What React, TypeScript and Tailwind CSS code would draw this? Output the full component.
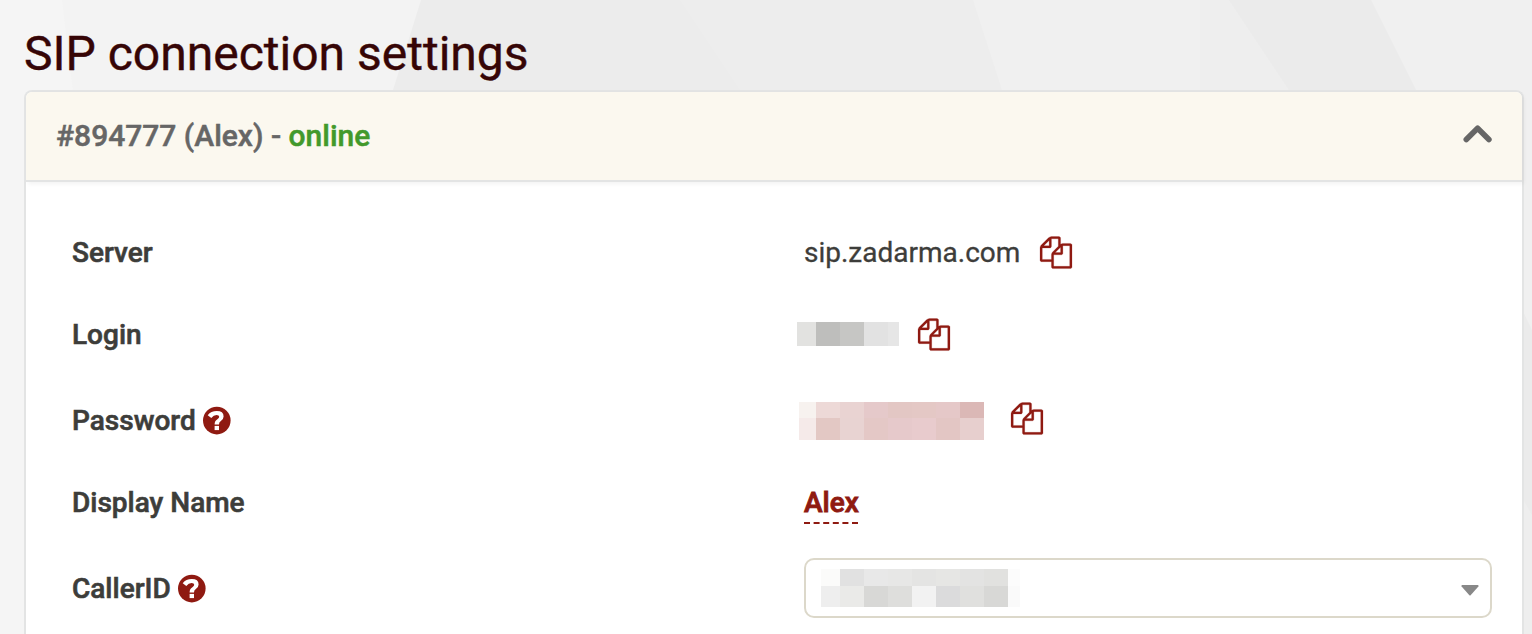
import React from 'react';
import { clsx } from 'clsx';

interface IconProps {
  className?: string;
}

interface RowProps {
  label: string;
  hint?: boolean;
  className?: string;
  children: React.ReactNode;
}

interface MaskProps {
  rows: string[][];
  columns: string;
  className?: string;
}

const LOGIN_MASK = [['#e2e2e0', '#bebebc', '#c6c6c4', '#e2e2e2', '#e6e6e6']];

const PASSWORD_MASK = [
  ['#f7f2ef', '#edd9d7', '#e9d3d2', '#e5c9ca', '#e3c7c4', '#e4c8c5', '#e5c8c8', '#dbb8b6'],
  ['#f5eae9', '#e3c8c4', '#e8d3d2', '#e4c8c6', '#e6c9cb', '#e8cbcd', '#e3c6c4', '#e7cfce'],
];

const CALLER_MASK = [
  ['#fbfbfa', '#e1e1e1', '#e8e8e8', '#e7e7e6', '#e4e4e3', '#e6e6e4', '#e3e3e2', '#e1e1df', '#fcfcfc'],
  ['#eeeeee', '#eaeae8', '#d8d8d6', '#dededc', '#f2f2f2', '#dbdbdc', '#e0e0de', '#d8d8d6', '#fafafa'],
];

function CopyIcon({ className }: IconProps) {
  return (
    <svg
      viewBox="0 24 1792 1792"
      fill="currentColor"
      stroke="currentColor"
      strokeWidth="12"
      className={clsx('h-8 w-8 shrink-0 overflow-visible text-[#8f1a11]', className)}
    >
      <path d="M1696 384q40 0 68 28t28 68v1216q0 40-28 68t-68 28h-960q-40 0-68-28t-28-68v-288h-544q-40 0-68-28t-28-68v-672q0-40 20-88t48-76l408-408q28-28 76-48t88-20h416q40 0 68 28t28 68v328q68-40 128-40h416zm-544 213l-299 299h299v-299zm-640-384l-299 299h299v-299zm196 647l316-316v-416h-384v416q0 40-28 68t-68 28h-416v640h512v-256q0-40 20-88t48-76zm956 804v-1152h-384v416q0 40-28 68t-68 28h-416v640h896z" />
    </svg>
  );
}

function HintIcon({ className }: IconProps) {
  return (
    <svg viewBox="0 0.4 28 28" fill="none" className={clsx('h-7 w-7 shrink-0 overflow-visible', className)}>
      <circle cx="13.8" cy="14" r="13.8" fill="#8f1a11" />
      <path
        d="M4.7 8.6Q8 4.4 13.8 4.4Q20.6 4.4 20.6 9.8Q20.6 12.8 17.6 14.6Q16 15.6 16 17.9H11.6Q11.6 14.2 14.4 12.6Q16.2 11.5 16.2 10.2Q16.2 8.4 13.6 8.4Q10.6 8.4 8.3 11.4Z"
        fill="#fff"
      />
      <path d="M11.6 19.3H16V23.5H11.6Z" fill="#fff" />
    </svg>
  );
}

// Hidden value, shown as coloured blocks
function Mask({ rows, columns, className }: MaskProps) {
  return (
    <div className={clsx('grid shrink-0', columns, className)}>
      {rows.flat().map((color, i) => (
        <div key={i} style={{ backgroundColor: color }}></div>
      ))}
    </div>
  );
}

function Row({ label, hint, className, children }: RowProps) {
  return (
    <div className={clsx('grid grid-cols-[732px_688px] items-center', className)}>
      <div className={clsx('flex items-center gap-[7px] font-medium', hint && 'pt-px')}>
        <span className="[-webkit-text-stroke:0.6px_currentColor]">{label}</span>
        {hint && <HintIcon />}
      </div>
      <div className="flex items-center">{children}</div>
    </div>
  );
}

function Backdrop() {
  return (
    <svg viewBox="0 0 1532 634" className="absolute inset-0 h-full w-full">
      <path d="M0 0H1532V634H0Z" fill="#f5f5f5" />
      <path d="M62 0H1532V634H170Q95 300 62 0Z" fill="#f3f3f3" />
      <path d="M421 0H1532V634H360L393 90Z" fill="#ececec" />
      <path d="M680 0H1532V634H1160L740 90Z" fill="#ededed" />
      <path d="M973 0H1532V634H1160Q1030 250 1002 90Z" fill="#f0f0f0" />
      <path d="M1200 0H1532V634H1200Z" fill="#eeeeee" />
      <path d="M1229 0H1532V634H1600L1289 90Z" fill="#ebebeb" />
      <path d="M1371 0H1532V330L1416 90Z" fill="#f0f0f0" />
    </svg>
  );
}

export default function App() {
  return (
    <div className="relative h-[634px] w-[1532px] overflow-hidden font-[Roboto,sans-serif] text-[28px] leading-8 text-[#3d3d3a]">
      <Backdrop />

      <div className="relative flex h-full flex-col pl-6">
        <h1 className="h-[90px] pt-[26px] text-[48px] leading-[56px] text-[#360506] [-webkit-text-stroke:0.4px_currentColor]">
          SIP connection settings
        </h1>

        <section className="w-[1500px] grow rounded-t-lg border-2 border-b-0 border-[#e3e4e4] bg-white">
          <header className="flex h-[90px] items-center justify-between rounded-t-md border-b-2 border-[#e3e4e4] bg-[#fbf8ef] pr-[29px] pl-[30px] text-[30px] font-medium text-[#666666] shadow-[2px_2px_4px_rgba(0,0,0,0.05)]">
            <div className="[-webkit-text-stroke:0.5px_currentColor]">
              #894777 (Alex) - <span className="text-[#42992b]">online</span>
            </div>
            <svg viewBox="0 0 30 20" fill="none" stroke="currentColor" strokeWidth="5.6" strokeLinecap="round" strokeLinejoin="round" className="mb-1 h-5 w-[30px]">
              <path d="M3.3 15.6L14.6 4.3L25.9 15.6" />
            </svg>
          </header>

          <div className="pt-[30px] pl-[46px]">
            <Row label="Server" className="h-[82px]">
              <span className="[-webkit-text-stroke:0.3px_currentColor]">sip.zadarma.com</span>
              <CopyIcon className="mb-px ml-5" />
            </Row>
            <Row label="Login" className="h-[82px]">
              <Mask rows={LOGIN_MASK} columns="grid-cols-[19px_24px_24px_24px_11px]" className="mb-0.5 -ml-[7px] h-6" />
              <CopyIcon className="mb-px ml-[19.2px]" />
            </Row>
            <Row label="Password" hint className="h-[88px]">
              <Mask rows={PASSWORD_MASK} columns="grid-cols-[17px_24px_24px_24px_24px_24px_24px_24px] grid-rows-[16px_22px]" className="mt-0.5 -ml-[5px]" />
              <CopyIcon className="mb-[3px] ml-[26.8px]" />
            </Row>
            <Row label="Display Name" className="h-[78px]">
              <span className="-mb-[5px] w-[54px] border-b-2 border-dashed border-[#8f1a11] pb-[3px] font-medium text-[#8f1a11] [-webkit-text-stroke:0.9px_currentColor]">
                Alex
              </span>
            </Row>
            <Row label="CallerID" hint className="h-[92px]">
              <div className="flex h-[60px] w-full items-center justify-between rounded-[10px] border-2 border-[#dcd8ca] bg-white pr-[11px] pl-[15px]">
                <Mask rows={CALLER_MASK} columns="grid-cols-[19px_24px_24px_24px_24px_24px_24px_24px_12px] grid-rows-[17px_21px]" />
                <svg viewBox="0 0 18 11" fill="#888888" className="mt-1 h-[11px] w-[18px]">
                  <path d="M1 0H17Q18 0.6 17.4 1.6L9.6 10.2Q9 10.8 8.4 10.2L0.6 1.6Q0 0.6 1 0Z" />
                </svg>
              </div>
            </Row>
          </div>
        </section>
      </div>
    </div>
  );
}
